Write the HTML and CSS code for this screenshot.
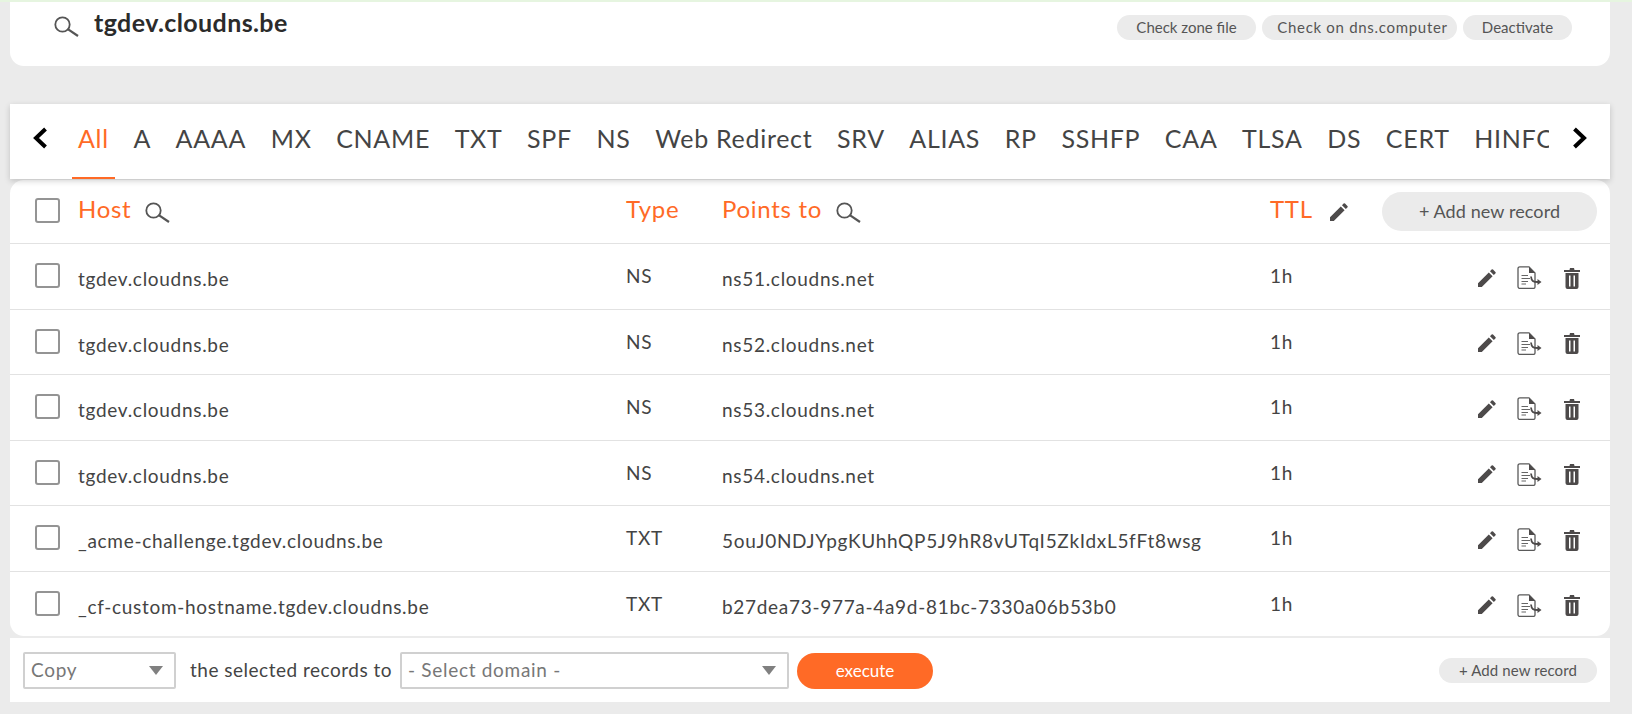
FILE: index.html
```html
<!DOCTYPE html>
<html lang="en">
<head>
<meta charset="utf-8">
<title>tgdev.cloudns.be</title>
<link rel="stylesheet" href="styles.css">
</head>
<body>
<svg class="defs" width="0" height="0" aria-hidden="true">
  <symbol id="i-search" viewBox="0 0 26 21"><circle cx="9.500" cy="8.500" r="7.200" fill="none" stroke="#555" stroke-width="1.800"/><path d="M14.800 13.200 L25 20" fill="none" stroke="#555" stroke-width="2.200"/></symbol>
  <symbol id="i-pencil" viewBox="0 0 18 18"><path d="M0 18V14.200L10.800 3.400 14.600 7.200 3.800 18Z M12 2.200 13.600.6a1 1 0 0 1 1.400 0l2.400 2.400a1 1 0 0 1 0 1.400L15.800 6Z" fill="#4d4a4a"/></symbol>
  <symbol id="i-file" viewBox="0 0 25 23"><path d="M3 .8H12L18 7V21a1.400 1.400 0 0 1-1.400 1.400H3A1.800 1.800 0 0 1 1 20.600V2.600A1.800 1.800 0 0 1 3 .8Z" fill="#fff" stroke="#5a5a5a" stroke-width="1.300"/><path d="M12 1V7H18Z" fill="#4d4a4a"/><path d="M4.500 9.500H11M4.500 12.500H13M4.500 15.500H11M4.500 18H9" stroke="#666" stroke-width="1.100" fill="none"/><path d="M14 10.500C14.500 15 16 16 21 16" stroke="#4d4a4a" stroke-width="1.800" fill="none"/><path d="M20.500 13 24.500 16 20.500 19Z" fill="#4d4a4a"/></symbol>
  <symbol id="i-trash" viewBox="0 0 16 22"><path d="M0 3H5.500L6 1H10L10.500 3H16V5H0Z" fill="#4d4a4a"/><path d="M1.500 6H14.500V20a2 2 0 0 1-2 2H3.500a2 2 0 0 1-2-2ZM5 8.500V19.500H6.500V8.500ZM9.500 8.500V19.500H11V8.500Z" fill="#4d4a4a" fill-rule="evenodd"/></symbol>
  <symbol id="i-left" viewBox="0 0 15 22"><path d="M12.500 2 3 11 12.500 20" fill="none" stroke="#000" stroke-width="4"/></symbol>
  <symbol id="i-right" viewBox="0 0 15 22"><path d="M2.500 2 12 11 2.500 20" fill="none" stroke="#000" stroke-width="4"/></symbol>
</svg>

<main class="page">
  <section class="zone-card">
    <div class="zone-title">
      <svg class="search-lg"><use href="#i-search"/></svg>
      <h1>tgdev.cloudns.be</h1>
    </div>
    <div class="zone-actions">
      <a class="pill pill-a">Check zone file</a>
      <a class="pill pill-b">Check on dns.computer</a>
      <a class="pill pill-c">Deactivate</a>
    </div>
  </section>

  <nav class="tabs">
    <svg class="chev"><use href="#i-left"/></svg>
    <div class="tab-list">
      <a class="tab active">All</a><a class="tab">A</a><a class="tab">AAAA</a><a class="tab">MX</a><a class="tab">CNAME</a><a class="tab">TXT</a><a class="tab">SPF</a><a class="tab">NS</a><a class="tab">Web Redirect</a><a class="tab">SRV</a><a class="tab">ALIAS</a><a class="tab">RP</a><a class="tab">SSHFP</a><a class="tab">CAA</a><a class="tab">TLSA</a><a class="tab">DS</a><a class="tab">CERT</a><a class="tab">HINFO</a>
    </div>
    <svg class="chev"><use href="#i-right"/></svg>
  </nav>

  <section class="records">
    <div class="row head">
      <span class="box"></span>
      <div class="c-host"><span>Host</span><svg class="search"><use href="#i-search"/></svg></div>
      <div class="c-type"><span>Type</span></div>
      <div class="c-points"><span>Points to</span><svg class="search"><use href="#i-search"/></svg></div>
      <div class="c-ttl"><span>TTL</span><svg class="pencil"><use href="#i-pencil"/></svg></div>
      <a class="add-large">+ Add new record</a>
    </div>
    <div class="row"><span class="box"></span><div class="c-host">tgdev.cloudns.be</div><div class="c-type">NS</div><div class="c-points">ns51.cloudns.net</div><div class="c-ttl">1h</div><div class="acts"><svg class="pencil"><use href="#i-pencil"/></svg><svg class="file"><use href="#i-file"/></svg><svg class="trash"><use href="#i-trash"/></svg></div></div>
    <div class="row"><span class="box"></span><div class="c-host">tgdev.cloudns.be</div><div class="c-type">NS</div><div class="c-points">ns52.cloudns.net</div><div class="c-ttl">1h</div><div class="acts"><svg class="pencil"><use href="#i-pencil"/></svg><svg class="file"><use href="#i-file"/></svg><svg class="trash"><use href="#i-trash"/></svg></div></div>
    <div class="row"><span class="box"></span><div class="c-host">tgdev.cloudns.be</div><div class="c-type">NS</div><div class="c-points">ns53.cloudns.net</div><div class="c-ttl">1h</div><div class="acts"><svg class="pencil"><use href="#i-pencil"/></svg><svg class="file"><use href="#i-file"/></svg><svg class="trash"><use href="#i-trash"/></svg></div></div>
    <div class="row"><span class="box"></span><div class="c-host">tgdev.cloudns.be</div><div class="c-type">NS</div><div class="c-points">ns54.cloudns.net</div><div class="c-ttl">1h</div><div class="acts"><svg class="pencil"><use href="#i-pencil"/></svg><svg class="file"><use href="#i-file"/></svg><svg class="trash"><use href="#i-trash"/></svg></div></div>
    <div class="row"><span class="box"></span><div class="c-host">_acme-challenge.tgdev.cloudns.be</div><div class="c-type">TXT</div><div class="c-points">5ouJ0NDJYpgKUhhQP5J9hR8vUTqI5ZkIdxL5fFt8wsg</div><div class="c-ttl">1h</div><div class="acts"><svg class="pencil"><use href="#i-pencil"/></svg><svg class="file"><use href="#i-file"/></svg><svg class="trash"><use href="#i-trash"/></svg></div></div>
    <div class="row"><span class="box"></span><div class="c-host">_cf-custom-hostname.tgdev.cloudns.be</div><div class="c-type">TXT</div><div class="c-points">b27dea73-977a-4a9d-81bc-7330a06b53b0</div><div class="c-ttl">1h</div><div class="acts"><svg class="pencil"><use href="#i-pencil"/></svg><svg class="file"><use href="#i-file"/></svg><svg class="trash"><use href="#i-trash"/></svg></div></div>
  </section>

  <footer class="bulk">
    <div class="select sel-action"><span>Copy</span><i class="caret"></i></div>
    <span class="bulk-label">the selected records to</span>
    <div class="select sel-domain"><span>- Select domain -</span><i class="caret"></i></div>
    <a class="execute">execute</a>
    <a class="add-small">+ Add new record</a>
  </footer>
</main>
</body>
</html>
```
FILE: styles.css
```css
* { box-sizing: border-box; }
html, body { margin: 0; height: 100%; }
body {
  background: #ebebeb;
  font-family: "Lato", "Noto Sans", sans-serif;
  color: #444;
  overflow: hidden;
  border-top: 2px solid #e6f5e0;
}
a { text-decoration: none; }
.defs { position: absolute; }
.page { width: 1600px; margin-left: 10px; }

.zone-card {
  height: 64px;
  background: #fff;
  border-radius: 0 0 14px 14px;
  display: flex;
  justify-content: space-between;
  padding: 13px 38px 0 43px;
}
.zone-title { display: flex; align-items: flex-start; gap: 15px; }
.search-lg { width: 26px; height: 21px; margin-top: 1px; }
.zone-title h1 {
  margin: -8px 0 0;
  font-size: 25px;
  line-height: 30px;
  font-weight: 700;
  color: #2b2b2b;
  letter-spacing: .4px;
}
.zone-actions { display: flex; gap: 6px; }
.pill {
  height: 25px;
  border-radius: 13px;
  background: #ebebeb;
  color: #555;
  font-size: 15px;
  line-height: 25px;
  text-align: center;
}
.pill-a { width: 139px; }
.pill-b { width: 195px; padding-left: 6px; letter-spacing: .7px; }
.pill-c { width: 109px; }

.tabs {
  height: 75px;
  margin-top: 38px;
  background: #fff;
  box-shadow: 0 2px 6px rgba(0,0,0,.18);
  display: flex;
  align-items: flex-start;
  padding: 0 23px;
  position: relative;
  z-index: 1;
}
.chev { width: 15px; height: 22px; flex: none; margin-top: 23px; }
.tab-list {
  flex: 1;
  min-width: 0;
  display: flex;
  gap: 24.600px;
  overflow: hidden;
  margin: 0 23px 0 24px;
  padding: 0 0 0 6px;
  height: 75px;
}
.tab {
  flex: none;
  font-size: 25px;
  line-height: 30px;
  letter-spacing: .7px;
  padding-top: 19px;
  color: #444;
  position: relative;
  height: 75px;
}
.tab.active { color: #ff6a26; }
.tab.active::after {
  content: "";
  position: absolute;
  left: -6px;
  right: -6px;
  bottom: 0;
  height: 2px;
  background: #ff6a26;
}

.records {
  margin-top: 1px;
  background: #fff;
  border-radius: 14px;
  font-size: 19px;
  letter-spacing: .7px;
  height: 456px;
}
.row {
  height: 65.500px;
  display: flex;
  align-items: flex-start;
  padding-left: 25px;
  border-bottom: 1px solid #e2e2e2;
  line-height: 24px;
}
.row:last-child { border-bottom: 0; }
.head {
  height: 64px;
  font-size: 24px;
  line-height: 30px;
  letter-spacing: .7px;
  color: #ff6a26;
  padding-top: 6px;
}
.box {
  width: 25px;
  height: 25px;
  flex: none;
  margin-top: 19px;
  border: 2px solid #949494;
  border-radius: 3px;
  background: #fff;
}
.head .box { margin-top: 12px; }
.c-host, .c-type, .c-points, .c-ttl { flex: none; display: flex; align-items: flex-start; }
.c-host { width: 548px; margin-left: 18px; padding-top: 23px; }
.c-type { width: 96px; padding-top: 20px; }
.c-points { width: 548px; padding-top: 23px; }
.c-ttl { width: 112px; padding-top: 20px; }
.head .c-host, .head .c-type, .head .c-points, .head .c-ttl { padding-top: 8px; }
.search { width: 26px; height: 21px; margin: 8px 0 0 13px; }
.pencil { width: 18px; height: 18px; flex: none; }
.head .pencil { margin: 9px 0 0 17px; }
.add-large {
  width: 215px;
  height: 39px;
  margin-top: 6px;
  border-radius: 20px;
  background: #ebebeb;
  color: #555;
  font-size: 18px;
  letter-spacing: .1px;
  line-height: 39px;
  text-align: center;
}
.acts {
  margin-left: 96px;
  display: flex;
  align-items: center;
  gap: 21px;
  padding-top: 22px;
}
.file { width: 25px; height: 23px; }
.trash { width: 16px; height: 22px; margin-left: 1px; }

.bulk {
  margin-top: 2px;
  height: 64px;
  background: #fff;
  display: flex;
  align-items: flex-start;
  padding: 14px 13px 0;
  font-size: 19px;
  letter-spacing: .7px;
  color: #444;
}
.select {
  height: 37px;
  border: 2px solid #d0d0d0;
  border-radius: 2px;
  display: flex;
  align-items: center;
  justify-content: space-between;
  padding: 0 11px 2px 6px;
  color: #777;
  background: #fff;
}
.sel-action { width: 153px; }
.sel-domain { width: 389px; margin-left: 6px; }
.caret {
  width: 0;
  height: 0;
  margin-top: 2px;
  border: 7px solid transparent;
  border-top: 9px solid #808080;
  border-bottom: 0;
}
.bulk-label { margin-left: 14px; width: 204px; line-height: 35px; letter-spacing: .5px; white-space: nowrap; }
.execute {
  width: 136px;
  height: 36px;
  margin-left: 8px;
  margin-top: 1px;
  border-radius: 18px;
  background: #ff6a26;
  color: #fff;
  font-size: 17px;
  letter-spacing: 0;
  line-height: 36px;
  text-align: center;
}
.add-small {
  width: 158px;
  height: 25px;
  margin: 6px 0 0 auto;
  border-radius: 13px;
  background: #ebebeb;
  color: #555;
  font-size: 15px;
  letter-spacing: .1px;
  line-height: 25px;
  text-align: center;
}
```
